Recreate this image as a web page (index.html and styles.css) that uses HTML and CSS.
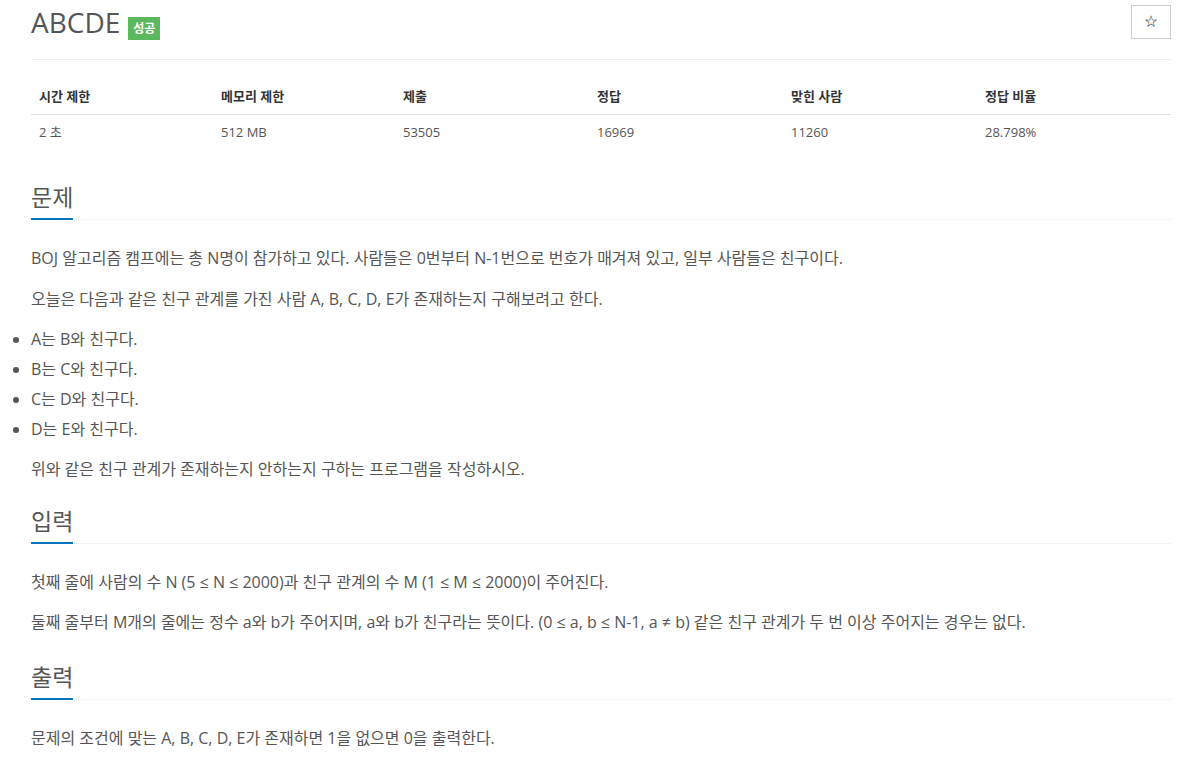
FILE: index.html
```html
<!DOCTYPE html>
<html lang="ko">
<head>
    <meta charset="UTF-8">
    <meta name="viewport" content="width=device-width, initial-scale=1.0">
    <title>ABCDE</title>
    <link rel="stylesheet" href="styles.css">
</head>
<body>

    <div class="container">
        <div class="page-header">
            <h1 class="problem-title">ABCDE <span class="label-success">성공</span></h1>
            <button class="star-btn">☆</button>
        </div>

        <table class="problem-info">
            <thead>
                <tr>
                    <th class="col-narrow">시간 제한</th>
                    <th class="col-narrow">메모리 제한</th>
                    <th>제출</th>
                    <th>정답</th>
                    <th>맞힌 사람</th>
                    <th>정답 비율</th>
                </tr>
            </thead>
            <tbody>
                <tr>
                    <td>2 초</td>
                    <td>512 MB</td>
                    <td>53505</td>
                    <td>16969</td>
                    <td>11260</td>
                    <td>28.798%</td>
                </tr>
            </tbody>
        </table>

        <section class="problem-section">
            <div class="headline"><h2><span>문제</span></h2></div>
            <div class="problem-text">
                <p>BOJ 알고리즘 캠프에는 총 N명이 참가하고 있다. 사람들은 0번부터 N-1번으로 번호가 매겨져 있고, 일부 사람들은 친구이다.</p>
                <p>오늘은 다음과 같은 친구 관계를 가진 사람 A, B, C, D, E가 존재하는지 구해보려고 한다.</p>
                <ul>
                    <li>A는 B와 친구다.</li>
                    <li>B는 C와 친구다.</li>
                    <li>C는 D와 친구다.</li>
                    <li>D는 E와 친구다.</li>
                </ul>
                <p>위와 같은 친구 관계가 존재하는지 안하는지 구하는 프로그램을 작성하시오.</p>
            </div>
        </section>

        <section class="problem-section">
            <div class="headline"><h2><span>입력</span></h2></div>
            <div class="problem-text">
                <p>첫째 줄에 사람의 수 N (5 ≤ N ≤ 2000)과 친구 관계의 수 M (1 ≤ M ≤ 2000)이 주어진다.</p>
                <p>둘째 줄부터 M개의 줄에는 정수 a와 b가 주어지며, a와 b가 친구라는 뜻이다. (0 ≤ a, b ≤ N-1, a ≠ b) 같은 친구 관계가 두 번 이상 주어지는 경우는 없다.</p>
            </div>
        </section>

        <section class="problem-section">
            <div class="headline"><h2><span>출력</span></h2></div>
            <div class="problem-text">
                <p>문제의 조건에 맞는 A, B, C, D, E가 존재하면 1을 없으면 0을 출력한다.</p>
            </div>
        </section>
    </div>

</body>
</html>
```

FILE: styles.css
```css
body {
    font-family: 'Open Sans', 'Noto Sans CJK KR', sans-serif;
    background-color: #ffffff;
    color: #555;
    margin: 0;
    padding: 0;
}

.container {
    width: 1140px;
    padding-left: 31px;
}

.page-header {
    display: flex;
    justify-content: space-between;
    align-items: flex-start;
    height: 59px;
    border-bottom: 1px solid #eee;
}

.problem-title {
    margin: 0;
    font-size: 28px;
    font-weight: 400;
    line-height: 44px;
    color: #555;
    display: flex;
    align-items: flex-start;
    gap: 8px;
}

.label-success {
    background-color: #5cb85c;
    color: #fff;
    font-size: 12px;
    font-weight: 700;
    padding: 0 5px;
    height: 23px;
    line-height: 23px;
    margin-top: 17px;
}

.star-btn {
    margin-top: 5px;
    width: 40px;
    height: 34px;
    background: #fff;
    border: 1px solid #ccc;
    font-size: 14px;
    color: #333;
    cursor: pointer;
    padding: 0;
}

.problem-info {
    width: 100%;
    table-layout: fixed;
    border-collapse: collapse;
    margin-top: 19px;
    margin-bottom: 35px;
    font-size: 13px;
}

.problem-info th {
    text-align: left;
    font-weight: 700;
    color: #333;
    padding: 8px;
    line-height: 19px;
    width: 178px;
    border-bottom: 1px solid #ddd;
}

.problem-info th.col-narrow {
    width: 166px;
}

.problem-info td {
    color: #555;
    padding: 8px;
    line-height: 19px;
}

.headline {
    margin-top: 26px;
    border-bottom: 1px dotted #e4e9f0;
}

.problem-section:last-child .headline {
    margin-top: 29px;
}

.headline h2 {
    margin: 0;
    font-size: 23px;
    font-weight: 400;
    line-height: 24px;
    color: #555;
}

.headline span {
    display: inline-block;
    padding-bottom: 9px;
    margin-bottom: -1px;
    border-bottom: 2px solid #0076c0;
}

.problem-text {
    padding-top: 26px;
    font-size: 16px;
}

.problem-text p {
    margin: 0 0 15px;
    line-height: 25.6px;
}

.problem-text ul {
    margin: 0 0 18px;
    padding: 2px 0 0;
}

.problem-text li {
    line-height: 20px;
    margin-bottom: 10px;
}
```
